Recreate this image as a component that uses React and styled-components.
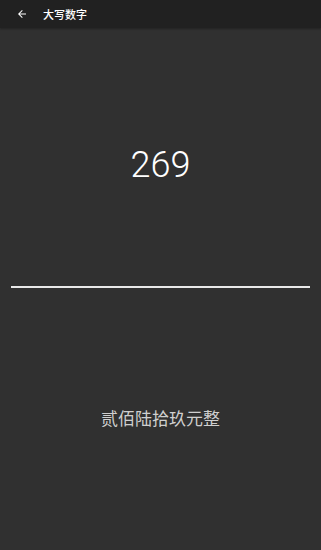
import React from "react";
import styled, { createGlobalStyle } from "styled-components";

const Global = createGlobalStyle`
  html, body { margin: 0; padding: 0; background: #303030; }
  body { font-family: Roboto, "Noto Sans CJK SC", sans-serif; }
`;

const Page = styled.div`
  width: 321px;
  height: 550px;
  background: #303030;
  display: flex;
  flex-direction: column;
`;

const Toolbar = styled.div`
  height: 28px;
  background: #212121;
  display: flex;
  align-items: center;
  padding-left: 15px;
  box-shadow: 0 1px 2px rgba(0,0,0,0.3);
`;

const BackButton = styled.div`
  width: 14px;
  height: 14px;
  display: flex;
  align-items: center;
  justify-content: center;
  color: #fff;
`;

const Title = styled.div`
  margin-left: 14px;
  color: #ffffff;
  font-size: 11px;
  font-weight: 500;
  font-family: "Noto Sans CJK SC", sans-serif;
`;

const Body = styled.div`
  flex: 1;
  display: flex;
  flex-direction: column;
  padding: 0 11px;
`;

const Number = styled.div`
  margin-top: 115px;
  height: 44px;
  text-align: center;
  color: #ffffff;
  font-family: Roboto, sans-serif;
  font-weight: 300;
  font-size: 36px;
  line-height: 44px;
`;

const Line = styled.div`
  margin-top: 99px;
  height: 1.5px;
  background: #e8e8e8;
`;

const Words = styled.div`
  margin-top: 118px;
  text-align: center;
  color: #cfcfcf;
  font-size: 17px;
  line-height: 24px;
  font-family: "Noto Sans CJK SC", sans-serif;
`;

export default function App() {
  return (
    <Page>
      <Global />
      <Toolbar>
        <BackButton>
          <svg width="12" height="12" viewBox="0 0 24 24" fill="#fff">
            <path d="M20 11H7.83l5.59-5.59L12 4l-8 8 8 8 1.41-1.41L7.83 13H20v-2z" />
          </svg>
        </BackButton>
        <Title>大写数字</Title>
      </Toolbar>
      <Body>
        <Number>269</Number>
        <Line />
        <Words>贰佰陆拾玖元整</Words>
      </Body>
    </Page>
  );
}
